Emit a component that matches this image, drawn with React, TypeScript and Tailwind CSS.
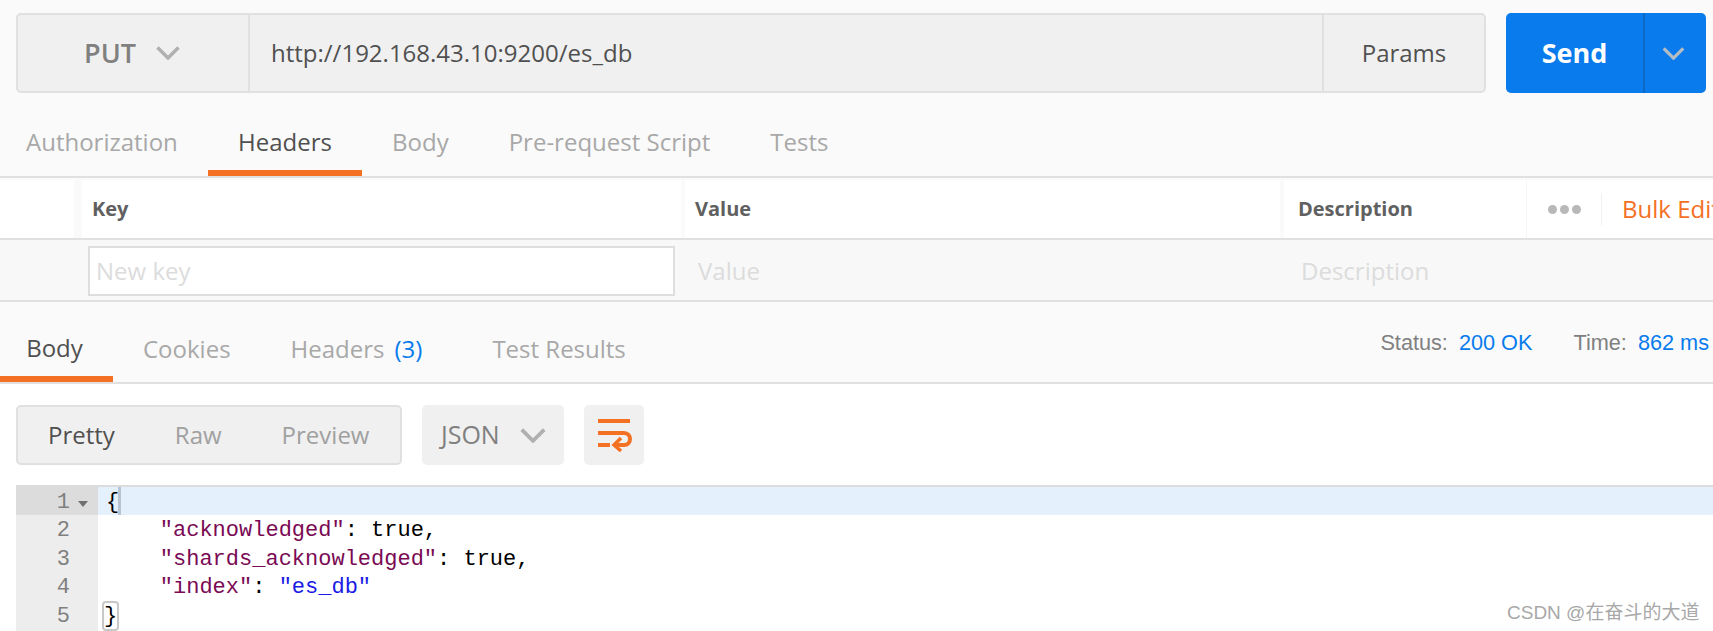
const sans = 'font-["Open_Sans",sans-serif]'

function Chevron({ className }: { className: string }) {
  return (
    <svg viewBox="0 0 24 14" className={className} fill="none" stroke="currentColor" strokeWidth="3.5">
      <path d="M1.5 1.5 L12 12 L22.5 1.5" />
    </svg>
  )
}

function WrapIcon() {
  return (
    <svg width="36" height="34" viewBox="0 0 36 34" fill="none" stroke="#f47023" strokeWidth="4">
      <path d="M2 3 H34" />
      <path d="M2 15 H28 C36 15 36 27 28 27 H20" />
      <path d="M2 27 H14" />
      <path d="M25 20 L18 27 L25 33" strokeWidth="3.5" />
    </svg>
  )
}

function RequestBar() {
  return (
    <div className="flex h-[80px] gap-[20px] pl-[16px] pt-0">
      <div className="flex w-[1470px] rounded-[5px] border-2 border-[#e0e0e0] bg-[#f0f0f0]">
        <div className="flex w-[232px] items-center justify-center gap-[20px] border-r-2 border-[#e0e0e0] pr-[2px]">
          <span className="text-[27px] font-semibold text-[#808080]">PUT</span>
          <Chevron className="h-[14px] w-[24px] text-[#b0b0b0]" />
        </div>
        <div className="flex flex-1 items-center pl-[21px] text-[24px] text-[#505050]">http://192.168.43.10:9200/es_db</div>
        <div className="flex w-[162px] items-center justify-center border-l-2 border-[#e0e0e0] text-[24px] text-[#505050]">Params</div>
      </div>
      <div className="flex w-[200px] rounded-[5px] bg-[#097bed]">
        <div className="flex w-[139px] items-center justify-center border-r-2 border-[#0d69c6] text-[27px] font-bold text-white">Send</div>
        <div className="flex flex-1 items-center justify-center pr-[4px]">
          <Chevron className="h-[13px] w-[23px] text-[#b4bcc4]" />
        </div>
      </div>
    </div>
  )
}

function RequestTabs() {
  return (
    <div className="mt-[19px] flex h-[66px] items-stretch border-b-2 border-[#e0e0e0] pl-[26px] text-[24px] text-[#a8a8a8]">
      <div className="flex h-[60px] w-[151px] items-center">Authorization</div>
      <div className="ml-[31px] flex h-[64px] w-[154px] items-start justify-center border-b-[6px] border-[#f47023] pt-[12px] text-[#505050]">Headers</div>
      <div className="ml-[30px] flex h-[60px] items-center">Body</div>
      <div className="ml-[60px] flex h-[60px] items-center">Pre-request Script</div>
      <div className="ml-[60px] flex h-[60px] items-center">Tests</div>
    </div>
  )
}

function HeadersTable() {
  return (
    <div>
      <div className="flex h-[62px] overflow-hidden border-b-2 border-[#e0e0e0] bg-[#fafafa] pt-[2px] text-[20px] font-bold text-[#606060]">
        <div className="w-[74px] shrink-0 bg-white" />
        <div className="ml-[8px] flex w-[599px] shrink-0 items-center bg-white pl-[10px]">Key</div>
        <div className="ml-[4px] flex w-[595px] shrink-0 items-center bg-white pl-[10px]">Value</div>
        <div className="ml-[4px] flex w-[242px] shrink-0 items-center bg-white pl-[14px]">Description</div>
        <div className="flex flex-1 items-center border-l border-[#f5f5f5] bg-white">
          <div className="flex w-[74px] shrink-0 items-center justify-center gap-[3px]">
            <span className="h-[9px] w-[9px] rounded-full bg-[#b8b8b8]" />
            <span className="h-[9px] w-[9px] rounded-full bg-[#b8b8b8]" />
            <span className="h-[9px] w-[9px] rounded-full bg-[#b8b8b8]" />
          </div>
          <div className="flex h-[32px] items-center whitespace-nowrap border-l border-[#f0f0f0] pl-[20px] text-[24px] font-normal text-[#f47023]">Bulk Edit</div>
        </div>
      </div>
      <div className="flex h-[62px] items-center border-b-2 border-[#e0e0e0] bg-[#f8f8f8] pt-[2px] text-[24px] text-[#dcdcdc]">
        <div className="ml-[88px] flex h-[50px] w-[587px] items-center border-2 border-[#dedede] bg-white pl-[6px]">New key</div>
        <div className="ml-[23px] w-[603px]">Value</div>
        <div>Description</div>
      </div>
    </div>
  )
}

function ResponseTabs() {
  return (
    <div className="mt-[17px] flex h-[65px] border-b-2 border-[#e0e0e0] text-[24px] text-[#a8a8a8]">
      <div className="flex h-[63px] w-[113px] items-start justify-center border-b-[6px] border-[#f47023] pr-[4px] pt-[11px] text-[#505050]">Body</div>
      <div className="ml-[30px] flex h-[60px] items-center">Cookies</div>
      <div className="ml-[60px] flex h-[60px] items-center">
        Headers<span className="ml-[10px] text-[#097bed]">(3)</span>
      </div>
      <div className="ml-[70px] flex h-[60px] items-center">Test Results</div>
      <div className='ml-auto flex h-[48px] items-center pr-[4px] font-["Liberation_Sans",sans-serif] text-[21.7px] text-[#808080]'>
        <span>Status:</span>
        <span className="ml-[11px] text-[#097bed]">200 OK</span>
        <span className="ml-[41px]">Time:</span>
        <span className="ml-[11px] text-[#097bed]">862 ms</span>
      </div>
    </div>
  )
}

function ViewToolbar() {
  return (
    <div className="mt-[21px] flex h-[60px] gap-[20px] pl-[16px] text-[24px]">
      <div className="flex w-[386px] items-center rounded-[5px] border-2 border-[#e0e0e0] bg-[#f0f0f0] text-[#a0a0a0]">
        <span className="ml-[30px] text-[#505050]">Pretty</span>
        <span className="ml-[60px]">Raw</span>
        <span className="ml-[60px]">Preview</span>
      </div>
      <div className="flex w-[142px] items-center rounded-[5px] bg-[#f0f0f0] pl-[19px] text-[25px] text-[#808080]">
        JSON
        <Chevron className="ml-[20px] h-[15px] w-[26px] text-[#b0b0b0]" />
      </div>
      <div className="flex w-[60px] items-center justify-center rounded-[5px] bg-[#f0f0f0]">
        <WrapIcon />
      </div>
    </div>
  )
}

const lines = [
  <span className="ml-[-1px]">{'{'}<span className="relative top-[-2px] ml-[-1px] inline-block h-[28px] w-[3px] bg-[#b8c4d2] align-top" /></span>,
  <span className="text-black">{'    '}<span className="text-[#7a0a54]">"acknowledged"</span>: true,</span>,
  <span className="text-black">{'    '}<span className="text-[#7a0a54]">"shards_acknowledged"</span>: true,</span>,
  <span className="text-black">{'    '}<span className="text-[#7a0a54]">"index"</span>: <span className="text-[#1a1ae6]">"es_db"</span></span>,
  <span className="relative top-[-2px] ml-[-5px] inline-block h-[30px] rounded-[4px] border-2 border-[#c8c8c8] leading-[28px]">{'}'}</span>,
  '',
]

function Editor() {
  return (
    <div className='mt-[20px] ml-[16px] border-t-2 border-[#dcdcdc] font-["Liberation_Mono",monospace] text-[22px]'>
      {lines.map((line, i) => (
        <div key={i} className={`flex h-[28.4px] leading-[28px] ${i === 0 ? 'bg-[#e5f0fd]' : ''}`}>
          <div className={`flex w-[82px] shrink-0 items-start pt-[2px] text-[#808080] ${i === 0 ? 'bg-[#dcdcdc]' : 'bg-[#ededed]'}`}>
            <span className="w-[54px] text-right">{i < 5 ? i + 1 : ''}</span>
            {i === 0 && <span className="ml-[8px] mt-[12px] h-0 w-0 border-x-[5px] border-t-[6px] border-x-transparent border-t-[#707070]" />}
          </div>
          <div className="whitespace-pre pl-[9px] pt-[2px] text-black">{line}</div>
        </div>
      ))}
    </div>
  )
}

export default function App() {
  return (
    <div className={`relative h-[631px] w-[1713px] overflow-hidden bg-white pt-[13px] ${sans}`}>
      <div className="absolute inset-x-0 top-0 h-[13px] bg-[#fafafa]" />
      <div className="relative bg-[#fafafa]">
        <RequestBar />
        <RequestTabs />
        <HeadersTable />
        <ResponseTabs />
      </div>
      <ViewToolbar />
      <Editor />
      <div className='absolute left-[1507px] top-[599px] font-["Liberation_Sans","Noto_Sans_CJK_SC",sans-serif] text-[19px] text-[#a8a8a8]'>
        CSDN @在奋斗的大道
      </div>
    </div>
  )
}
